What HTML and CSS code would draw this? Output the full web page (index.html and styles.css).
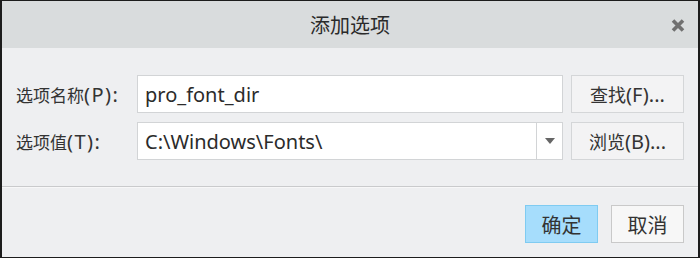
FILE: index.html
```html
<!DOCTYPE html>
<html lang="zh">
<head>
<meta charset="utf-8">
<link rel="stylesheet" href="styles.css">
</head>
<body>
<div class="dialog">
  <div class="titlebar">
    <span class="title">添加选项</span>
    <span class="close" aria-label="关闭">
      <svg width="14" height="13" viewBox="0 0 14 13"><path d="M2 1.5 L12 11.5 M12 1.5 L2 11.5" stroke="#707070" stroke-width="3.6"/></svg>
    </span>
  </div>
  <div class="content">
    <div class="form">
      <label class="label"><span class="cjk">选项名称</span><span class="lat">(P):</span></label>
      <div class="field"><span class="value">pro_font_dir</span></div>
      <button class="btn side"><span class="cjk">查找</span>(F)...</button>
      <label class="label"><span class="cjk">选项值</span><span class="lat">(T):</span></label>
      <div class="field combo">
        <span class="value">C:\Windows\Fonts\</span>
        <span class="drop"><svg width="10" height="6" viewBox="0 0 10 6"><path d="M0 0 H10 L5 6 Z" fill="#666"/></svg></span>
      </div>
      <button class="btn side"><span class="cjk">浏览</span>(B)...</button>
    </div>
  </div>
  <div class="separator"></div>
  <div class="footer">
    <button class="btn primary">确定</button>
    <button class="btn cancel">取消</button>
  </div>
</div>
</body>
</html>
```
FILE: styles.css
```css
* { box-sizing: border-box; }
html, body { margin: 0; padding: 0; }
body {
  font-family: "Noto Sans", "Noto Sans CJK SC", sans-serif;
  color: #333;
  background: #eeeff1;
}
.dialog {
  width: 700px;
  height: 258px;
  border-style: solid;
  border-color: #1c1c1c;
  border-width: 1px 2px 1px 2px;
  background: #eeeff1;
  display: flex;
  flex-direction: column;
}
.titlebar {
  height: 47px;
  background: #d9dcdd;
  display: flex;
  align-items: center;
  justify-content: center;
  position: relative;
}
.title {
  font-size: 20px;
  color: #2a2a2a;
}
.close {
  position: absolute;
  right: 13px;
  top: 18px;
  display: flex;
}
.content {
  padding: 27px 14px 0 14px;
  height: 138px;
}
.form {
  display: grid;
  grid-template-columns: 113px 426px 113px;
  grid-auto-rows: 38px;
  column-gap: 8px;
  row-gap: 9px;
}
.label {
  font-size: 20px;
  display: flex;
  align-items: center;
  color: #333;
  white-space: nowrap;
}
.label .cjk { font-size: 17px; }
.label .lat { letter-spacing: 1.5px; }
.field {
  background: #fff;
  border: 1px solid #d2d4d6;
  display: flex;
  align-items: center;
  padding-left: 7px;
  font-size: 20px;
  color: #2b2b2b;
}
.field .value { flex: 1; }
.combo .drop {
  width: 26px;
  align-self: stretch;
  border-left: 1px solid #d2d4d6;
  display: flex;
  align-items: center;
  justify-content: center;
}
.btn {
  font-family: inherit;
  font-size: 20px;
  color: #333;
  margin: 0;
  padding: 0;
  display: flex;
  align-items: center;
  justify-content: center;
}
.side {
  background: #f3f3f4;
  border: 1px solid #d4d6d8;
}
.side .cjk { font-size: 18px; }
.separator {
  height: 2px;
  border-top: 1px solid #c9cacc;
  border-bottom: 1px solid #f7f7f8;
}
.footer {
  display: flex;
  justify-content: flex-end;
  gap: 13px;
  padding: 17px 14px 0 0;
}
.footer .btn {
  width: 73px;
  height: 38px;
  font-size: 20px;
}
.primary {
  background: #a6ddfc;
  border: 1px solid #7fcbf1;
}
.cancel {
  background: #f7f7f7;
  border: 1px solid #c9c9c9;
}
```
